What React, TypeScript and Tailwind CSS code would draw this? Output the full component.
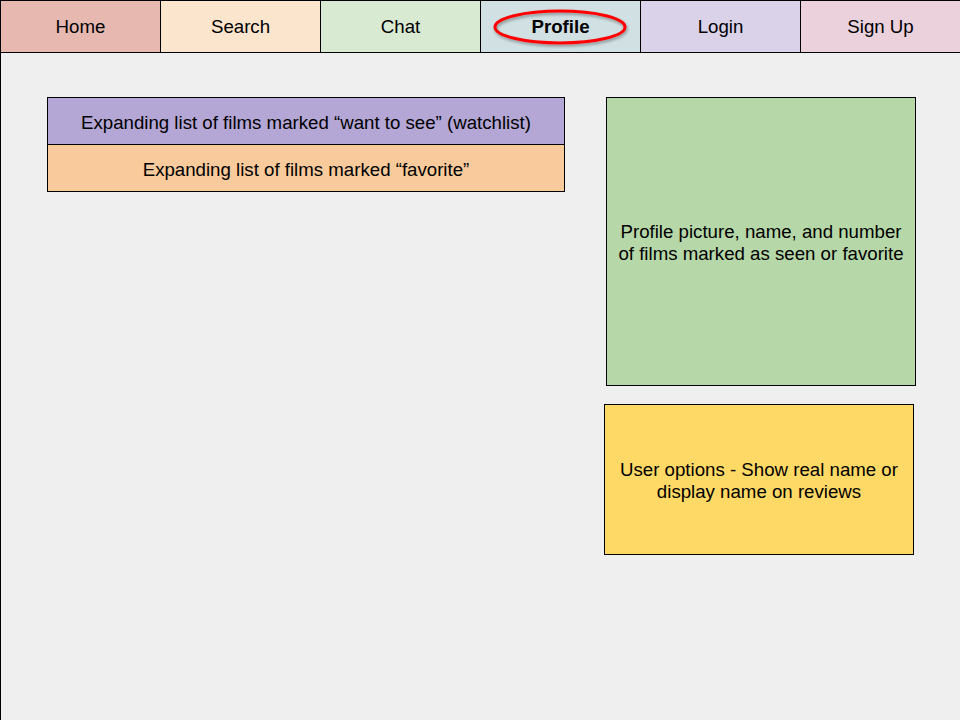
import React from "react";

const tabs = [
  { label: "Home", bg: "bg-[#e6b8af]" },
  { label: "Search", bg: "bg-[#fce5cd]" },
  { label: "Chat", bg: "bg-[#d9ead3]" },
  { label: "Profile", bg: "bg-[#d0e0e3]", active: true },
  { label: "Login", bg: "bg-[#d9d2e9]" },
  { label: "Sign Up", bg: "bg-[#ead1dc]" },
];

export default function App() {
  return (
    <div
      className="w-[960px] h-[720px] bg-[#efefef] border-l border-black flex flex-col text-black overflow-hidden"
      style={{ fontFamily: '"Liberation Sans", Arial, sans-serif' }}
    >
      <nav className="flex h-[53px] border-t border-b-[1.5px] border-black">
        {tabs.map((t, i) => (
          <div
            key={t.label}
            className={`relative flex items-center justify-center pt-[1px] text-[18.67px] ${t.bg} ${
              i < tabs.length - 1 ? "w-[160px] border-r border-black" : "flex-1"
            } ${t.active ? "font-bold" : ""}`}
          >
            {t.active && (
              <svg
                className="absolute left-[11px] top-[6px]"
                width="140"
                height="42"
                viewBox="0 0 140 42"
              >
                <defs>
                  <filter id="sh" x="-20%" y="-40%" width="140%" height="180%">
                    <feDropShadow dx="1" dy="2" stdDeviation="1.5" floodColor="#000" floodOpacity="0.35" />
                  </filter>
                </defs>
                <ellipse
                  cx="68"
                  cy="20"
                  rx="65"
                  ry="16"
                  fill="none"
                  stroke="#ff0000"
                  strokeWidth="3"
                  filter="url(#sh)"
                />
              </svg>
            )}
            <span className="relative">{t.label}</span>
          </div>
        ))}
      </nav>
      <div className="flex items-start pt-[44px] pl-[46px]">
        <div className="w-[518px] flex flex-col border border-black text-[18.67px]">
          <div className="h-[47px] pt-[3px] bg-[#b4a7d6] flex items-center justify-center border-b border-black">
            Expanding list of films marked “want to see” (watchlist)
          </div>
          <div className="h-[46px] pt-[3px] bg-[#f9cb9c] flex items-center justify-center">
            Expanding list of films marked “favorite”
          </div>
        </div>
        <div className="ml-[41px] flex flex-col text-[18.67px] leading-[22px]">
          <div className="w-[310px] h-[289px] pt-[2px] bg-[#b6d7a8] border-[1.5px] border-black flex items-center justify-center text-center">
            Profile picture, name, and number
            <br />
            of films marked as seen or favorite
          </div>
          <div className="-ml-[2px] mt-[18px] w-[310px] h-[151px] pt-[2px] bg-[#ffd966] border-[1.5px] border-black flex items-center justify-center text-center">
            User options - Show real name or
            <br />
            display name on reviews
          </div>
        </div>
      </div>
    </div>
  );
}
